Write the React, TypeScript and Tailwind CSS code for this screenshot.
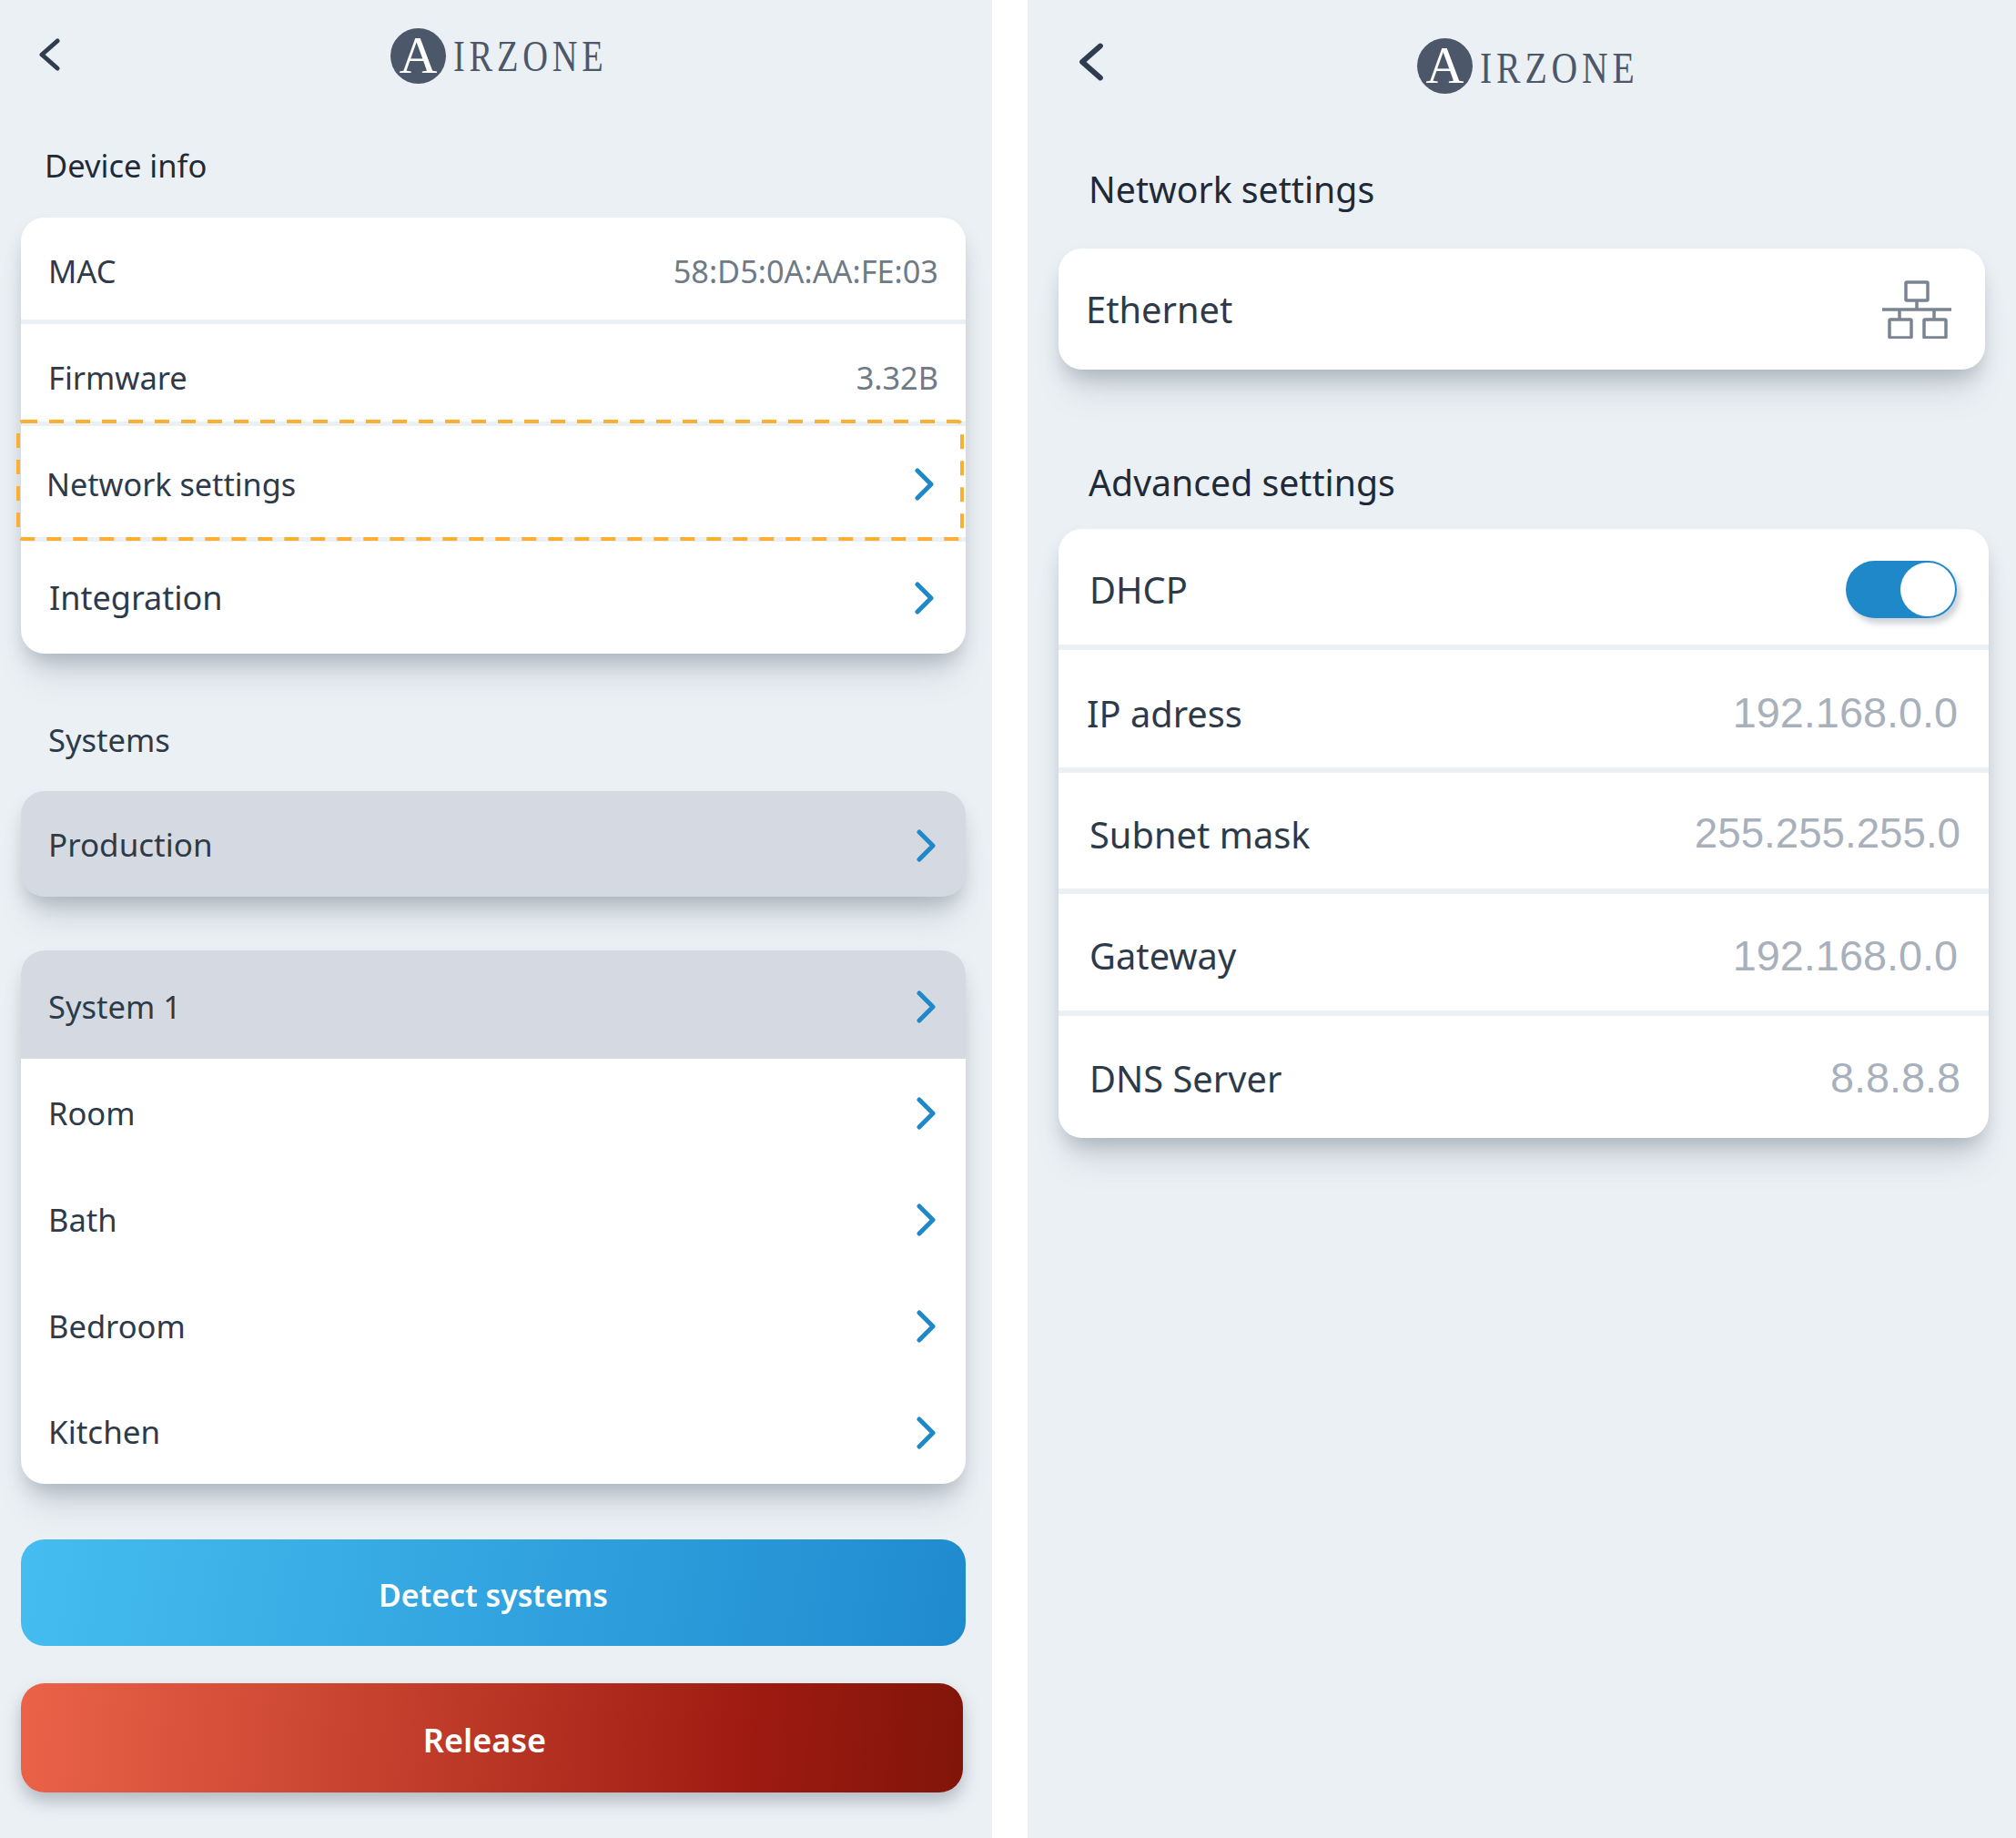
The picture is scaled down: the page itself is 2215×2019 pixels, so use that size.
import type { ReactNode } from "react";

const cardShadow = "shadow-[0_12px_20px_-4px_rgba(96,110,125,0.32),0_34px_36px_-12px_rgba(96,110,125,0.2)]";

function Chevron({ className = "" }: { className?: string }) {
  return (
    <svg width="22" height="36" viewBox="0 0 22 36" fill="none" className={`shrink-0 ${className}`}>
      <path d="M3 3 L18 18 L3 33" stroke="#1f88c9" strokeWidth="5" strokeLinecap="round" strokeLinejoin="round" />
    </svg>
  );
}

function BackArrow({ large = false }: { large?: boolean }) {
  return (
    <svg
      width={large ? 30 : 25}
      height={large ? 42 : 36}
      viewBox="0 0 25 36"
      fill="none"
      className={`shrink-0 ${large ? "mb-[8px]" : ""}`}
    >
      <path d="M21 3 L4 18 L21 33" stroke="#2f3d4f" strokeWidth="5" strokeLinecap="round" strokeLinejoin="round" />
    </svg>
  );
}

function Logo({ className = "", large = false }: { className?: string; large?: boolean }) {
  return (
    <div className={`flex items-center ${className}`}>
      <div className="flex h-[61px] w-[61px] shrink-0 items-center justify-center rounded-full bg-[#4c5869] font-['Liberation_Serif',serif] text-[58px] leading-none text-white">
        A
      </div>
      <span
        className={`ml-[8px] origin-left font-['Liberation_Serif',serif] leading-none tracking-[6px] text-[#4c5869] ${
          large ? "mt-[4px] scale-x-[0.81] text-[49px]" : "mt-[2px] scale-x-[0.8] text-[48px]"
        }`}
      >
        IRZONE
      </span>
    </div>
  );
}

function Row({
  label,
  h,
  value,
  chevron,
  sep,
  chevronClass = "mr-[2px]",
  textClass = "pl-[30px]",
}: {
  label: string;
  h: string;
  value?: string;
  chevron?: boolean;
  sep?: boolean;
  chevronClass?: string;
  textClass?: string;
}) {
  return (
    <div className={`flex items-center justify-between pr-[30px] ${h} ${textClass} ${sep ? "border-b-[5px] border-[#ebf0f4]" : ""}`}>
      <span className="text-[#2d3a4a]">{label}</span>
      {value && <span className="text-[34.3px] text-[#6f7a87]">{value}</span>}
      {chevron && <Chevron className={chevronClass} />}
    </div>
  );
}

function SettingRow({
  label,
  h,
  value,
  sep,
  labelPad = "pl-[34px]",
  pad = "pr-[31px]",
  valueSize = "text-[46.8px]",
  children,
}: {
  label: string;
  h: string;
  value?: string;
  sep?: boolean;
  labelPad?: string;
  pad?: string;
  valueSize?: string;
  children?: ReactNode;
}) {
  return (
    <div className={`flex items-center justify-between ${labelPad} ${pad} ${h} ${sep ? "border-b-[6px] border-[#ebf0f4]" : ""}`}>
      <span className="text-[#2d3a4a]">{label}</span>
      {value && <span className={`font-['Liberation_Sans',sans-serif] ${valueSize} text-[#a8b1bb]`}>{value}</span>}
      {children}
    </div>
  );
}

function NetworkIcon() {
  return (
    <svg width="76" height="64" viewBox="0 0 76 64" fill="none" stroke="#7a8593" strokeWidth="3.5">
      <rect x="26" y="2" width="24" height="20" rx="1" />
      <rect x="8" y="43" width="24" height="20" rx="1" />
      <rect x="46" y="43" width="24" height="20" rx="1" />
      <path d="M0 32 H76 M38 22 V32 M19 32 V43 M57 32 V43" />
    </svg>
  );
}

function Toggle() {
  return (
    <div className="flex h-[63px] w-[122px] items-center justify-end rounded-full bg-[#1f88c9] pr-[2px] shadow-[4px_6px_6px_rgba(96,110,125,0.3)]">
      <div className="h-[59px] w-[60px] rounded-full bg-white" />
    </div>
  );
}

function DeviceInfo() {
  return (
    <div className={`rounded-[26px] bg-white ${cardShadow}`}>
      <Row label="MAC" value="58:D5:0A:AA:FE:03" h="h-[117px] pt-[6px]" sep />
      <Row label="Firmware" value="3.32B" h="h-[112px] pt-[11px]" sep />
      <div className="relative text-[34.2px]">
        <Row label="Network settings" chevron chevronClass="mr-[4px]" h="h-[127px] pt-[6px]" sep textClass="pl-[28px]" />
        <svg width="1041" height="133" className="absolute left-[-5px] top-[-7px]" fill="none">
          <rect x="2" y="2" width="1037" height="129" rx="5" stroke="#fbb034" strokeWidth="4" strokeDasharray="16 13" />
        </svg>
      </div>
      <div className="flex h-[123px] items-center justify-between pl-[31px] pr-[30px] text-[36px]">
        <span className="text-[#2d3a4a]">Integration</span>
        <Chevron className="mr-[4px]" />
      </div>
    </div>
  );
}

function LeftPanel() {
  return (
    <div className="w-[1090px] shrink-0 bg-[#ebf0f4] pl-[23px] pr-[29px] text-[34.5px]">
      <div className="flex h-[120px] items-center pl-[19px]">
        <BackArrow />
        <Logo className="ml-[362px] mt-[2px]" />
      </div>
      <div className="flex h-[119px] items-center pl-[26px] pt-[5px] text-[#1f2a38]">Device info</div>
      <DeviceInfo />
      <div className="flex h-[151px] items-center pl-[30px] pt-[38px] text-[#2d3a4a]">Systems</div>
      <div className={`rounded-[26px] bg-[#d5dae2] text-[35px] ${cardShadow}`}>
        <Row label="Production" chevron h="h-[116px] pt-[3px]" />
      </div>
      <div className={`mt-[59px] rounded-[26px] bg-white ${cardShadow}`}>
        <div className="rounded-t-[26px] bg-[#d5dae2]">
          <Row label="System 1" chevron h="h-[119px] pt-[5px]" />
        </div>
        <Row label="Room" chevron h="h-[118px] pt-[2px]" />
        <Row label="Bath" chevron h="h-[117px] pt-[1px]" />
        <Row label="Bedroom" chevron h="h-[116px] pt-[2px]" />
        <div className="text-[35px]">
          <Row label="Kitchen" chevron h="h-[116px] pt-[3px]" />
        </div>
      </div>
      <button className="mt-[61px] flex h-[117px] w-full items-center justify-center rounded-[26px] bg-[linear-gradient(100deg,#45bdf0,#1f8bcf)] pt-[5px] text-[33.8px] font-semibold text-white">
        Detect systems
      </button>
      <button className="mt-[41px] flex h-[120px] w-[1035px] items-center justify-center rounded-[26px] bg-[linear-gradient(95deg,#ea6349,#c43f2c_40%,#9d1a11_78%,#811509)] pr-[16px] pt-[5px] text-[36px] font-semibold text-white shadow-[0_10px_18px_rgba(96,110,125,0.4)]">
        Release
      </button>
      <div className="h-[50px]" />
    </div>
  );
}

function RightPanel() {
  return (
    <div className="ml-[39px] flex-1 bg-[#ebf0f4] pl-[34px] pr-[30px] text-[39.8px]">
      <div className="flex h-[144px] items-center pl-[21px]">
        <BackArrow large />
        <Logo large className="ml-[343px]" />
      </div>
      <div className="flex h-[129px] items-center pl-[33px] text-[39.2px] text-[#1f2a38]">Network settings</div>
      <div className={`flex h-[133px] w-[1018px] items-center justify-between rounded-[26px] bg-white pl-[30px] pr-[37px] ${cardShadow}`}>
        <span className="text-[#2d3a4a]">Ethernet</span>
        <NetworkIcon />
      </div>
      <div className="flex h-[175px] items-center pl-[33px] pt-[74px] text-[39.2px] text-[#1f2a38]">Advanced settings</div>
      <div className={`rounded-[26px] bg-white ${cardShadow}`}>
        <SettingRow label="DHCP" h="h-[133px] pt-[6px]" sep pad="pr-[35px]">
          <Toggle />
        </SettingRow>
        <SettingRow label="IP adress" value="192.168.0.0" labelPad="pl-[31px]" h="h-[135px] pt-[10px]" sep pad="pr-[34px]" />
        <SettingRow label="Subnet mask" value="255.255.255.0" valueSize="text-[45.7px]" h="h-[133px] pt-[8px]" sep />
        <SettingRow label="Gateway" value="192.168.0.0" h="h-[134px] pt-[8px]" sep pad="pr-[34px]" />
        <SettingRow label="DNS Server" value="8.8.8.8" h="h-[134px] pt-[3px]" />
      </div>
    </div>
  );
}

export default function App() {
  return (
    <div className="flex min-h-[2019px] w-[2215px] bg-white font-['Noto_Sans',sans-serif]">
      <LeftPanel />
      <RightPanel />
    </div>
  );
}
